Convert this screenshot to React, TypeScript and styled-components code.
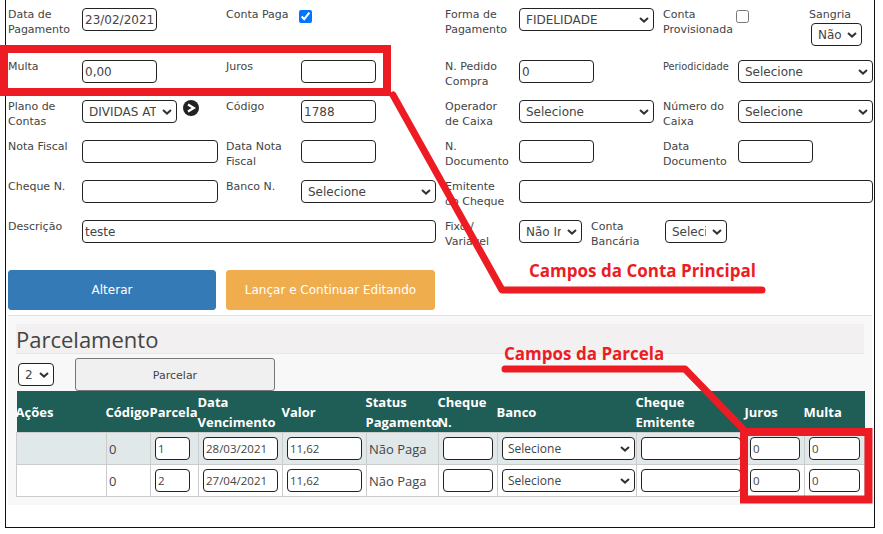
import styled, { createGlobalStyle } from "styled-components";

const GlobalStyle = createGlobalStyle`
    html, body {
        margin: 0;
        padding: 0;
        background: #fff;
    }
`;

const chevron = `url("data:image/svg+xml,%3Csvg xmlns='http://www.w3.org/2000/svg' width='10' height='6' viewBox='0 0 10 6'%3E%3Cpath d='M1 1l4 3.6L9 1' fill='none' stroke='%23333' stroke-width='2'/%3E%3C/svg%3E")`;

const Page = styled.div`
    position: relative;
    width: 883px;
    height: 534px;
    overflow: hidden;
    font-family: "DejaVu Sans", sans-serif;
    color: #444;
`;

const Frame = styled.div`
    box-sizing: border-box;
    margin-left: 5px;
    width: 870px;
    height: 528px;
    padding: 8px 2px 0 2px;
    border: 1px solid #111;
    border-top: none;
`;

const FormRow = styled.div<{ $tall?: boolean }>`
    display: grid;
    grid-template-columns: 74px 144px 75px 144px 74px 144px 75px 135px;
    height: ${(props) => (props.$tall ? "52px" : "40px")};
    align-items: start;
`;

const Label = styled.label<{ $small?: boolean }>`
    display: block;
    margin-top: -1px;
    font-size: ${(props) => (props.$small ? "9.8px" : "11px")};
    line-height: 15px;
    color: #444;
`;

const Input = styled.input<{ $w?: number }>`
    box-sizing: border-box;
    display: block;
    width: ${(props) => (props.$w ? `${props.$w}px` : "100%")};
    height: 23px;
    padding: 1px 2px;
    border: 1px solid #222;
    border-radius: 4px;
    background: #fff;
    font-family: "DejaVu Sans", sans-serif;
    font-size: 12px;
    color: #444;
`;

const Select = styled.select<{ $w: number }>`
    box-sizing: border-box;
    display: block;
    appearance: none;
    width: ${(props) => props.$w}px;
    height: 23px;
    padding: 0 20px 0 6px;
    border: 1px solid #222;
    border-radius: 4px;
    background: #fff ${chevron} no-repeat right 4px center;
    font-family: "DejaVu Sans", sans-serif;
    font-size: 12px;
    color: #444;
`;

const Check = styled.input.attrs({ type: "checkbox" })`
    display: block;
    width: 13px;
    height: 13px;
    margin: 2px 0 0 -2px;
`;

const Span = styled.div<{ $n: number }>`
    grid-column: span ${(props) => props.$n};
`;

const InlineCell = styled.div`
    display: flex;
    align-items: flex-start;
`;

const SangriaBox = styled.div`
    display: flex;
    flex-direction: column;
    align-items: flex-start;
    margin-left: 60px;
`;

const SangriaSelect = styled(Select)`
    margin: 1px 0 0 2px;
    padding-right: 14px;
`;

const ContaLabel = styled(Label)`
    width: 74px;
    margin-left: 9px;
`;

const GoIcon = styled.svg`
    display: block;
    margin: 0 0 0 6px;
`;

const Buttons = styled.div`
    display: flex;
    gap: 10px;
    margin-top: 10px;
`;

const ActionButton = styled.button<{ $color: string; $w: number }>`
    width: ${(props) => props.$w}px;
    height: 40px;
    border: 1px solid ${(props) => props.$color};
    border-radius: 3px;
    background: ${(props) => props.$color};
    color: #fff;
    font-family: "DejaVu Sans", sans-serif;
    font-size: 12px;
`;

const Divider = styled.hr`
    margin: 5px 0 0 0;
    border: none;
    border-top: 1px solid #e2e2e2;
`;

const Panel = styled.section`
    box-sizing: border-box;
    height: 189px;
    padding: 8px;
    background: #f8f8f8;
`;

const PanelTitle = styled.h2`
    margin: 0;
    height: 30px;
    background: #f2f0f0;
    border-bottom: 1px solid #e8e8e8;
    box-sizing: border-box;
    font-family: "Open Sans", sans-serif;
    font-weight: 400;
    font-size: 22px;
    line-height: 30px;
    color: #444;
`;

const Toolbar = styled.div`
    display: flex;
    align-items: flex-start;
    height: 37px;
    padding: 4px 0 0 2px;
    box-sizing: border-box;
`;

const CountSelect = styled(Select)`
    margin-top: 5px;
`;

const ParcelarButton = styled.button`
    width: 200px;
    height: 33px;
    margin-left: 21px;
    padding-top: 3px;
    border: 1px solid #777;
    border-radius: 3px;
    background: #f0f0f0;
    font-family: "DejaVu Sans", sans-serif;
    font-size: 11px;
    color: #444;
`;

const Table = styled.table`
    width: 848px;
    table-layout: fixed;
    border-collapse: collapse;
    font-family: "Open Sans", sans-serif;
`;

const HeadCell = styled.th`
    height: 41px;
    padding: 0;
    background: #1f5d57;
    color: #fff;
    font-size: 13px;
    font-weight: 700;
    line-height: 20px;
    text-align: left;
    white-space: nowrap;
`;

const HeadText = styled.div`
    margin-left: -1px;
`;

const BodyRow = styled.tr<{ $striped?: boolean }>`
    background: ${(props) => (props.$striped ? "#e1e8ea" : "#fff")};
`;

const Cell = styled.td`
    box-sizing: border-box;
    height: 32px;
    padding: 0 4px 0 2px;
    border: 1px solid #ccc;
    font-size: 13px;
    color: #444;
    white-space: nowrap;
`;

const InputCell = styled(Cell)`
    padding: 0 4px;
`;

const CellInput = styled(Input)`
    padding: 1px 2px;
    font-family: "Open Sans", sans-serif;
    font-size: 11.5px;
`;

const CellSelect = styled(Select)`
    padding-left: 5px;
    font-family: "Open Sans", sans-serif;
    font-size: 12px;
`;

const Overlay = styled.svg`
    position: absolute;
    top: 0;
    left: 0;
    pointer-events: none;
`;

const Note = styled.span<{ $x: number; $y: number }>`
    position: absolute;
    left: ${(props) => props.$x}px;
    top: ${(props) => props.$y}px;
    font-family: "Open Sans", sans-serif;
    font-weight: 700;
    font-size: 17px;
    line-height: 20px;
    color: #ed1c24;
    white-space: nowrap;
`;

const columns = [90, 44, 48, 84, 84, 72, 59, 139, 109, 59, 60];

const headers = [
    ["Ações"],
    ["Código"],
    ["Parcela"],
    ["Data", "Vencimento"],
    ["Valor"],
    ["Status", "Pagamento"],
    ["Cheque", "N."],
    ["Banco"],
    ["Cheque", "Emitente"],
    ["Juros"],
    ["Multa"],
];

const rows = [
    { parcela: "1", data: "28/03/2021", striped: true },
    { parcela: "2", data: "27/04/2021", striped: false },
];

function App() {
    return (
        <Page>
            <GlobalStyle />
            <Frame>
                <FormRow $tall>
                    <Label>Data de<br />Pagamento</Label>
                    <Input $w={75} defaultValue="23/02/2021" />
                    <Label>Conta Paga</Label>
                    <Check defaultChecked />
                    <Label>Forma de<br />Pagamento</Label>
                    <Select $w={135} defaultValue="FIDELIDADE"><option>FIDELIDADE</option></Select>
                    <Label>Conta<br />Provisionada</Label>
                    <InlineCell>
                        <Check />
                        <SangriaBox>
                            <Label>Sangria</Label>
                            <SangriaSelect $w={51}><option>Não</option></SangriaSelect>
                        </SangriaBox>
                    </InlineCell>
                </FormRow>
                <FormRow>
                    <Label>Multa</Label>
                    <Input $w={75} defaultValue="0,00" />
                    <Label>Juros</Label>
                    <Input $w={75} />
                    <Label>N. Pedido<br />Compra</Label>
                    <Input $w={75} defaultValue="0" />
                    <Label $small>Periodicidade</Label>
                    <Select $w={135}><option>Selecione</option></Select>
                </FormRow>
                <FormRow>
                    <Label>Plano de<br />Contas</Label>
                    <InlineCell>
                        <Select $w={95}><option>DIVIDAS ATIVAS</option></Select>
                        <GoIcon width="16" height="16" viewBox="0 0 16 16">
                            <circle cx="8" cy="8" r="8" fill="#222" />
                            <path d="M5 4.4L10.8 8 5 11.6" fill="none" stroke="#fff" strokeWidth="2.3" />
                        </GoIcon>
                    </InlineCell>
                    <Label>Código</Label>
                    <Input $w={75} defaultValue="1788" />
                    <Label>Operador<br />de Caixa</Label>
                    <Select $w={135}><option>Selecione</option></Select>
                    <Label>Número do<br />Caixa</Label>
                    <Select $w={135}><option>Selecione</option></Select>
                </FormRow>
                <FormRow>
                    <Label>Nota Fiscal</Label>
                    <Input $w={136} />
                    <Label>Data Nota<br />Fiscal</Label>
                    <Input $w={75} />
                    <Label>N.<br />Documento</Label>
                    <Input $w={75} />
                    <Label>Data<br />Documento</Label>
                    <Input $w={75} />
                </FormRow>
                <FormRow>
                    <Label>Cheque N.</Label>
                    <Input $w={136} />
                    <Label>Banco N.</Label>
                    <Select $w={135}><option>Selecione</option></Select>
                    <Label>Emitente<br />do Cheque</Label>
                    <Span $n={3}><Input /></Span>
                </FormRow>
                <FormRow>
                    <Label>Descrição</Label>
                    <Span $n={3}><Input $w={354} defaultValue="teste" /></Span>
                    <Label>Fixo /<br />Variável</Label>
                    <Span $n={3}>
                        <InlineCell>
                            <Select $w={63}><option>Não Informado</option></Select>
                            <ContaLabel>Conta<br />Bancária</ContaLabel>
                            <Select $w={62}><option>Selecione</option></Select>
                        </InlineCell>
                    </Span>
                </FormRow>
                <Buttons>
                    <ActionButton $color="#337ab7" $w={208}>Alterar</ActionButton>
                    <ActionButton $color="#f0ad4e" $w={209}>Lançar e Continuar Editando</ActionButton>
                </Buttons>
                <Divider />
                <Panel>
                    <PanelTitle>Parcelamento</PanelTitle>
                    <Toolbar>
                        <CountSelect $w={36}><option>2</option></CountSelect>
                        <ParcelarButton>Parcelar</ParcelarButton>
                    </Toolbar>
                    <Table>
                        <colgroup>
                            {columns.map((width, index) => (
                                <col key={index} width={width} />
                            ))}
                        </colgroup>
                        <thead>
                            <tr>
                                {headers.map((lines, index) => (
                                    <HeadCell key={index}>
                                        {lines.map((line) => (
                                            <HeadText key={line}>{line}</HeadText>
                                        ))}
                                    </HeadCell>
                                ))}
                            </tr>
                        </thead>
                        <tbody>
                            {rows.map((row) => (
                                <BodyRow key={row.parcela} $striped={row.striped}>
                                    <Cell />
                                    <Cell>0</Cell>
                                    <InputCell><CellInput $w={35} defaultValue={row.parcela} /></InputCell>
                                    <InputCell><CellInput defaultValue={row.data} /></InputCell>
                                    <InputCell><CellInput defaultValue="11,62" /></InputCell>
                                    <Cell>Não Paga</Cell>
                                    <InputCell><CellInput /></InputCell>
                                    <InputCell><CellSelect $w={133}><option>Selecione</option></CellSelect></InputCell>
                                    <InputCell><CellInput /></InputCell>
                                    <InputCell><CellInput defaultValue="0" /></InputCell>
                                    <InputCell><CellInput defaultValue="0" /></InputCell>
                                </BodyRow>
                            ))}
                        </tbody>
                    </Table>
                </Panel>
            </Frame>
            <Overlay width="883" height="534" viewBox="0 0 883 534">
                <rect x="4" y="49" width="383" height="43" fill="none" stroke="#ed1c24" strokeWidth="8" />
                <path d="M393 95L502 290H762" fill="none" stroke="#ed1c24" strokeWidth="7" strokeLinecap="round" strokeLinejoin="round" />
                <path d="M505 369H685L745 431" fill="none" stroke="#ed1c24" strokeWidth="7" strokeLinecap="round" strokeLinejoin="round" />
                <rect x="744" y="432" width="124.5" height="67.5" fill="none" stroke="#ed1c24" strokeWidth="8" />
            </Overlay>
            <Note $x={529} $y={261}>Campos da Conta Principal</Note>
            <Note $x={504} $y={344}>Campos da Parcela</Note>
        </Page>
    );
}

export default App;
